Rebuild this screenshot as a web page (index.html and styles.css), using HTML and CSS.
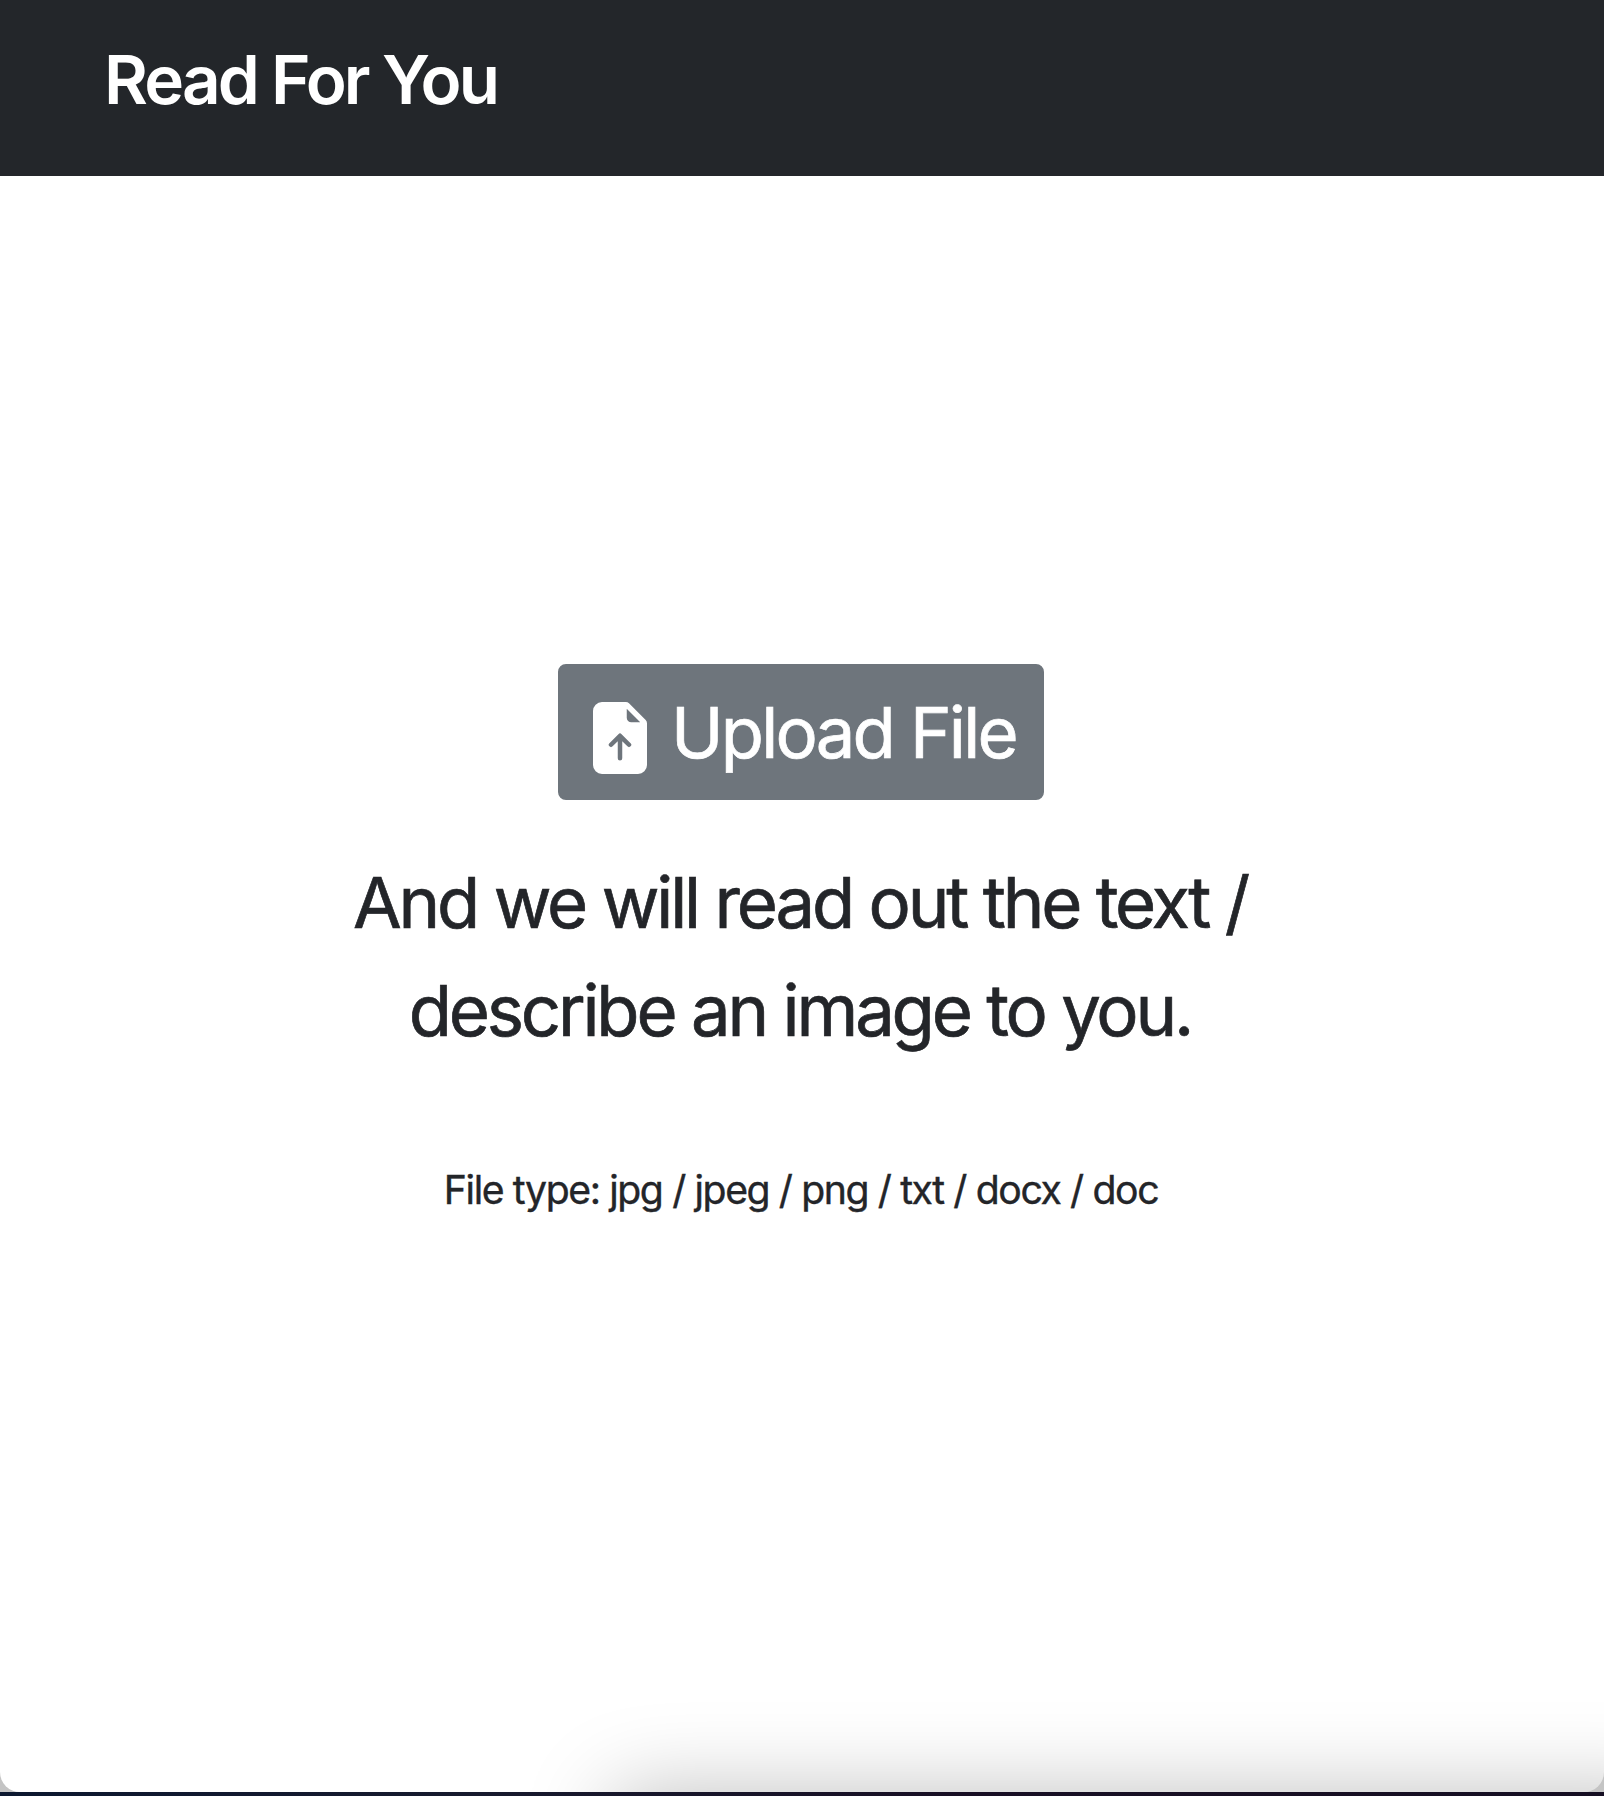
FILE: index.html
```
<!DOCTYPE html>
<html lang="en">
<head>
	<meta charset="utf-8">
	<title>Read For You</title>
	<link rel="stylesheet" href="styles.css">
</head>
<body>

	<div class="window">
		<div class="page">
			<header class="header">
				<h1>Read For You</h1>
			</header>

			<main class="content">
				<button type="button" class="upload-button">
					<svg class="upload-icon" viewBox="0 0 16 16" fill="currentColor" aria-hidden="true">
						<path d="M9.293 0H4a2 2 0 0 0-2 2v12a2 2 0 0 0 2 2h8a2 2 0 0 0 2-2V4.707A1 1 0 0 0 13.707 4L10 .293A1 1 0 0 0 9.293 0zM9.5 3.5v-2l3 3h-2a1 1 0 0 1-1-1zM6.354 9.854a.5.5 0 0 1-.708-.708l2-2a.5.5 0 0 1 .708 0l2 2a.5.5 0 0 1-.708.708L8.5 8.707V12.5a.5.5 0 0 1-1 0V8.707L6.354 9.854z"/>
					</svg>
					<span class="upload-label">Upload File</span>
				</button>
				<p class="description">And we will read out the text /<br>describe an image to you.</p>
				<p class="file-types">File type: jpg / jpeg / png / txt / docx / doc</p>
			</main>
		</div>
	</div>

</body>
</html>
```

FILE: styles.css
```
body {
	background: linear-gradient(90deg, #0c1830 0%, #171a2e 30%, #180f24 60%, #150e22 100%);
	color: #232529;
	font-family: Inter, "Liberation Sans", sans-serif;
	margin: 0;
}

.window {
	background-color: #c4c4c4;
	height: 1792px;
	margin-bottom: 4px;
}

.page {
	background-color: #FFFFFF;
	border-radius: 0 0 20px 20px;
	height: 100%;
	overflow: hidden;
	position: relative;
}

/* shadow coming up from the bottom edge */
.page::after {
	border-radius: 20px;
	box-shadow: 0 0 86px rgba(0, 0, 0, 0.25);
	content: "";
	height: 200px;
	left: 612px;
	position: absolute;
	right: -80px;
	top: 100%;
}

.header {
	background-color: #23262a;
	box-sizing: border-box;
	height: 176px;
	padding: 40px 104px 0;
}

h1 {
	color: #FFFFFF;
	font-size: 67.4px;
	font-weight: 600;
	letter-spacing: -2.85px;
	line-height: 80px;
	margin: 0;
}

.content {
	align-items: center;
	display: flex;
	flex-direction: column;
	padding-top: 488px;
	text-align: center;
}

.upload-button {
	align-items: center;
	background-color: #6e757c;
	border: 2px solid #6e757c;
	border-radius: 8px;
	box-sizing: border-box;
	color: #FFFFFF;
	cursor: pointer;
	display: flex;
	font-family: inherit;
	font-size: 70.6px;
	height: 136px;
	line-height: 108px;
	margin-right: 2px;
	padding: 13px 24px 11px;
	width: 486px;
}

.upload-icon {
	flex-shrink: 0;
	height: 72px;
	margin-top: 10px;
	width: 72px;
}

.upload-label {
	-webkit-text-stroke: 0.7px;
	letter-spacing: -2.8px;
	margin-left: 15px;
	white-space: nowrap;
}

.description {
	-webkit-text-stroke: 0.7px;
	font-size: 70.6px;
	letter-spacing: -3.2px;
	line-height: 108px;
	margin: 49px 0 95px;
	padding-right: 4px;
	white-space: nowrap;
}

.file-types {
	-webkit-text-stroke: 0.4px;
	font-size: 39.2px;
	letter-spacing: -1.4px;
	line-height: 60px;
	margin: 0;
	padding-right: 2px;
	white-space: nowrap;
}
```
